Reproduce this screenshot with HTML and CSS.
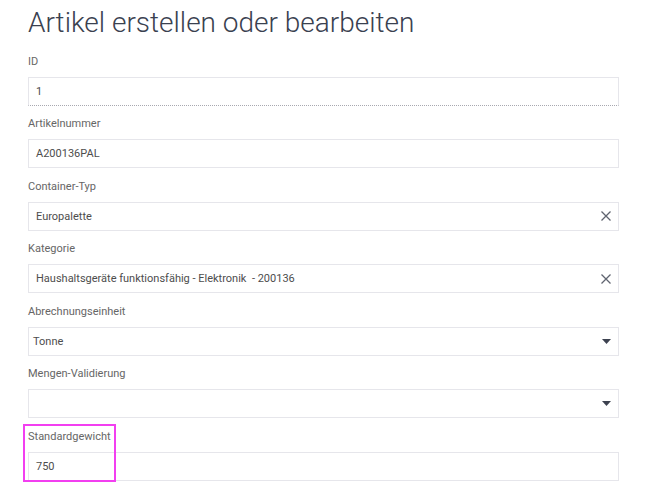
FILE: index.html
```html
<!DOCTYPE html>
<html lang="de">
<head>
<meta charset="utf-8">
<title>Artikel erstellen oder bearbeiten</title>
<link rel="stylesheet" href="styles.css">
</head>
<body>
<div class="page">
  <h1 class="title">Artikel erstellen oder bearbeiten</h1>
  <form class="form">
    <div class="field">
      <div class="label">ID</div>
      <div class="box box-disabled"><span class="value">1</span></div>
    </div>
    <div class="field">
      <div class="label">Artikelnummer</div>
      <div class="box"><span class="value">A200136PAL</span></div>
    </div>
    <div class="field">
      <div class="label">Container-Typ</div>
      <div class="box"><span class="value">Europalette</span>
        <svg class="clear" width="12" height="12" viewBox="0 0 12 12"><path d="M1.5 1.5L10.5 10.5M10.5 1.5L1.5 10.5" stroke="#5f6470" stroke-width="1.3" fill="none"/></svg>
      </div>
    </div>
    <div class="field">
      <div class="label">Kategorie</div>
      <div class="box"><span class="value">Haushaltsgeräte funktionsfähig - Elektronik&nbsp; - 200136</span>
        <svg class="clear" width="12" height="12" viewBox="0 0 12 12"><path d="M1.5 1.5L10.5 10.5M10.5 1.5L1.5 10.5" stroke="#5f6470" stroke-width="1.3" fill="none"/></svg>
      </div>
    </div>
    <div class="field">
      <div class="label">Abrechnungseinheit</div>
      <div class="box box-select"><span class="value">Tonne</span>
        <svg class="caret" width="9" height="5" viewBox="0 0 9 5"><path d="M0 0H9L4.5 5Z" fill="#3d4250"/></svg>
      </div>
    </div>
    <div class="field">
      <div class="label">Mengen-Validierung</div>
      <div class="box box-select"><span class="value"></span>
        <svg class="caret" width="9" height="5" viewBox="0 0 9 5"><path d="M0 0H9L4.5 5Z" fill="#3d4250"/></svg>
      </div>
    </div>
    <div class="field field-highlight">
      <div class="label">Standardgewicht</div>
      <div class="box"><span class="value">750</span></div>
      <div class="highlight"></div>
    </div>
  </form>
</div>
</body>
</html>
```

FILE: styles.css
```css
* { box-sizing: border-box; }
html, body { margin: 0; padding: 0; background: #ffffff; }
body { font-family: Roboto, "Liberation Sans", Arial, sans-serif; color: #444; }
.page { padding: 0 51px 0 28px; }
.title {
  margin: 0;
  padding-top: 2px;
  font-weight: 300;
  font-size: 28px;
  line-height: 42px;
  color: #3a4150;
  letter-spacing: 0;
}
.form { margin-top: 8.5px; }
.field { position: relative; margin-bottom: 9.5px; }
.label {
  font-size: 11px;
  line-height: 18px;
  height: 18px;
  color: #666666;
  margin-bottom: 6px;
}
.box {
  height: 29px;
  border: 1px solid #e6e6eb;
  display: flex;
  align-items: center;
  padding: 0 6px 0 7px;
  background: #fff;
}
.box-disabled {
  border-bottom: 1px dotted #a8a8b0;
}
.box-select { padding-left: 4px; }
.value {
  flex: 1;
  font-size: 11px;
  color: #4d4d4d;
}
.clear { flex: none; }
.caret { flex: none; margin-right: 1px; }
.highlight {
  position: absolute;
  left: -5px;
  top: -4px;
  width: 93px;
  height: 58px;
  border: 2px solid #f23ff0;
  pointer-events: none;
}
```
